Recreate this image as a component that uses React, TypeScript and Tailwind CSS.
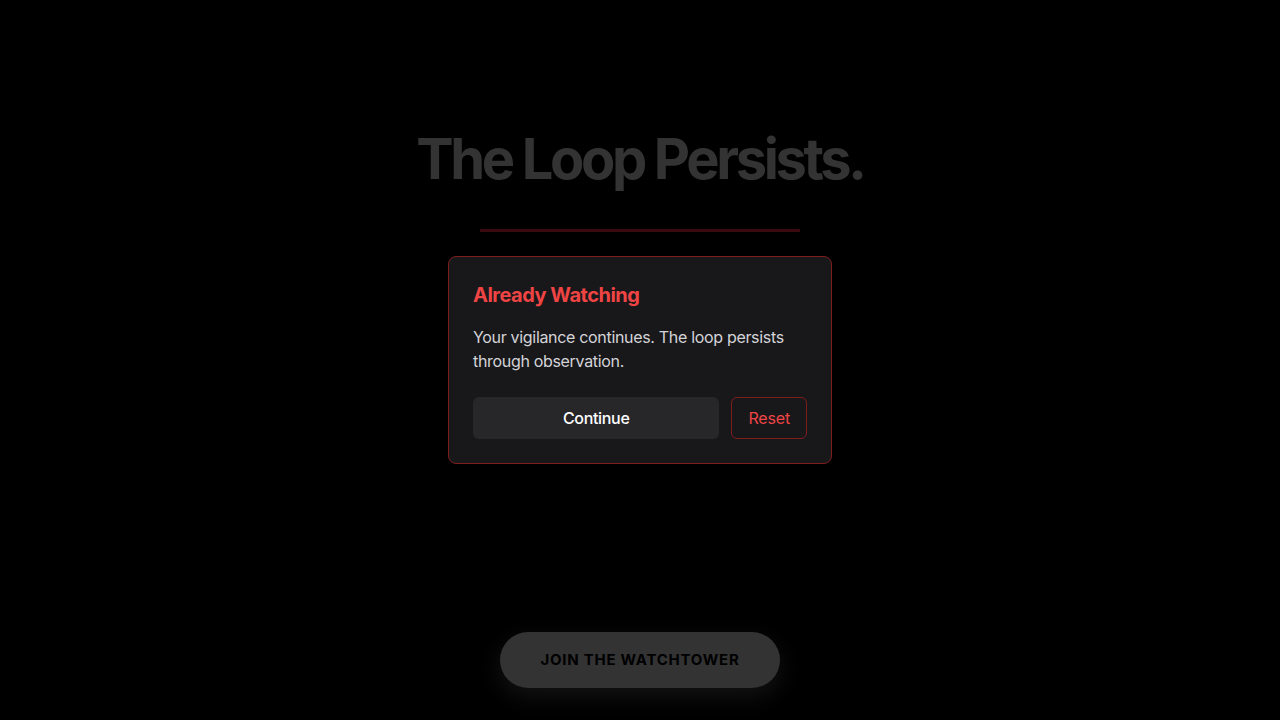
export default function App() {
  return (
    <main
      className="h-screen w-full bg-black flex flex-col items-center overflow-hidden"
      style={{ fontFamily: "Inter, 'Noto Sans', sans-serif" }}
    >
      <h1 className="mt-[131px] text-[56px] leading-none font-bold tracking-[-0.06em] text-[#333333]">
        The Loop Persists.
      </h1>

      <div className="mt-[42px] w-80 h-[3px] bg-[#3a0a0e]"></div>

      <div className="mt-6 w-96 rounded-lg border border-[#7f1d1d] bg-[#18181b] p-6">
        <h2 className="text-xl leading-7 font-bold tracking-[-0.025em] text-[#ef4444]">Already Watching</h2>
        <p className="mt-4 text-base leading-6 tracking-[-0.02em] text-[#d4d4d8]">
          Your vigilance continues. The loop persists through observation.
        </p>
        <div className="mt-6 flex gap-3">
          <button className="flex-1 rounded-md border border-transparent bg-[#27272a] py-2 text-base font-medium tracking-[-0.02em] text-white">
            Continue
          </button>
          <button className="rounded-md border border-[#7f1d1d] px-4 py-2 text-base tracking-[-0.01em] text-[#ef4444]">
            Reset
          </button>
        </div>
      </div>

      <div className="flex-1"></div>

      <button className="mb-8 w-[280px] rounded-full bg-[#333333] py-4 text-[15px] leading-6 font-bold uppercase tracking-[0.05em] text-black shadow-[0_8px_24px_rgba(40,40,40,0.5)]">
        Join the Watchtower
      </button>
    </main>
  );
}
